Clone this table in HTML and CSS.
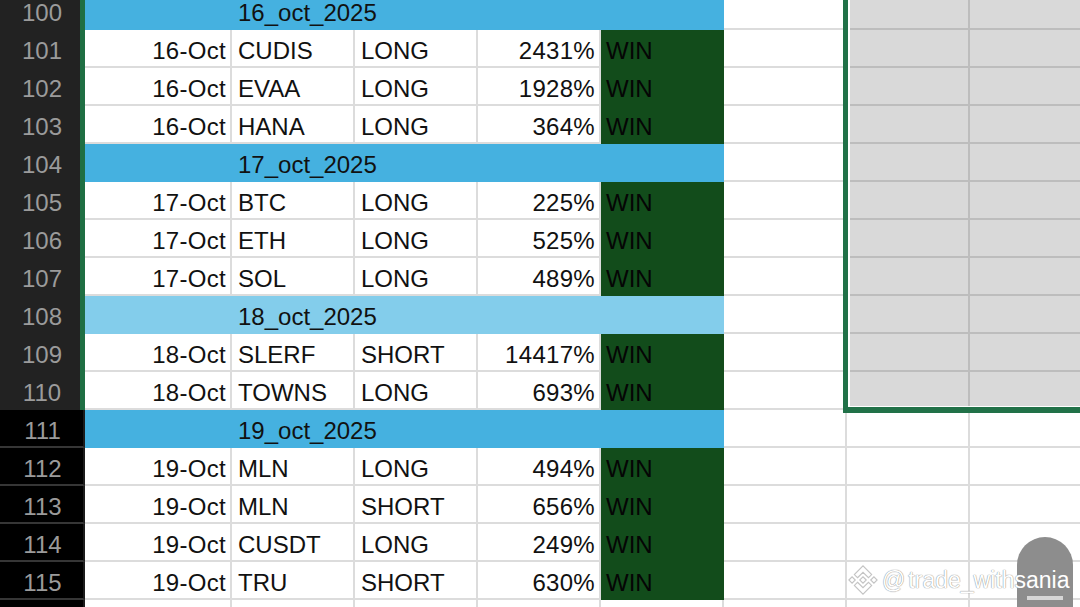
FILE: index.html
```html
<!DOCTYPE html>
<html>
<head>
<meta charset="utf-8">
<link rel="stylesheet" href="styles.css">
</head>
<body>
<div class="sheet">
  <div class="row sel"><div class="hdr">100</div><div class="band">16_oct_2025</div><div class="c"></div><div class="c g"></div><div class="c g"></div></div>
  <div class="row sel"><div class="hdr">101</div><div class="c r">16-Oct</div><div class="c">CUDIS</div><div class="c">LONG</div><div class="c r">2431%</div><div class="win">WIN</div><div class="c"></div><div class="c g"></div><div class="c g"></div></div>
  <div class="row sel"><div class="hdr">102</div><div class="c r">16-Oct</div><div class="c">EVAA</div><div class="c">LONG</div><div class="c r">1928%</div><div class="win">WIN</div><div class="c"></div><div class="c g"></div><div class="c g"></div></div>
  <div class="row sel"><div class="hdr">103</div><div class="c r">16-Oct</div><div class="c">HANA</div><div class="c">LONG</div><div class="c r">364%</div><div class="win">WIN</div><div class="c"></div><div class="c g"></div><div class="c g"></div></div>
  <div class="row sel"><div class="hdr">104</div><div class="band">17_oct_2025</div><div class="c"></div><div class="c g"></div><div class="c g"></div></div>
  <div class="row sel"><div class="hdr">105</div><div class="c r">17-Oct</div><div class="c">BTC</div><div class="c">LONG</div><div class="c r">225%</div><div class="win">WIN</div><div class="c"></div><div class="c g"></div><div class="c g"></div></div>
  <div class="row sel"><div class="hdr">106</div><div class="c r">17-Oct</div><div class="c">ETH</div><div class="c">LONG</div><div class="c r">525%</div><div class="win">WIN</div><div class="c"></div><div class="c g"></div><div class="c g"></div></div>
  <div class="row sel"><div class="hdr">107</div><div class="c r">17-Oct</div><div class="c">SOL</div><div class="c">LONG</div><div class="c r">489%</div><div class="win">WIN</div><div class="c"></div><div class="c g"></div><div class="c g"></div></div>
  <div class="row sel"><div class="hdr">108</div><div class="band light">18_oct_2025</div><div class="c"></div><div class="c g"></div><div class="c g"></div></div>
  <div class="row sel"><div class="hdr">109</div><div class="c r">18-Oct</div><div class="c">SLERF</div><div class="c">SHORT</div><div class="c r">14417%</div><div class="win">WIN</div><div class="c"></div><div class="c g"></div><div class="c g"></div></div>
  <div class="row sel"><div class="hdr">110</div><div class="c r">18-Oct</div><div class="c">TOWNS</div><div class="c">LONG</div><div class="c r">693%</div><div class="win">WIN</div><div class="c"></div><div class="c g"></div><div class="c g"></div></div>
  <div class="row"><div class="hdr">111</div><div class="band">19_oct_2025</div><div class="c"></div><div class="c"></div><div class="c"></div></div>
  <div class="row"><div class="hdr">112</div><div class="c r">19-Oct</div><div class="c">MLN</div><div class="c">LONG</div><div class="c r">494%</div><div class="win">WIN</div><div class="c"></div><div class="c"></div><div class="c"></div></div>
  <div class="row"><div class="hdr">113</div><div class="c r">19-Oct</div><div class="c">MLN</div><div class="c">SHORT</div><div class="c r">656%</div><div class="win">WIN</div><div class="c"></div><div class="c"></div><div class="c"></div></div>
  <div class="row"><div class="hdr">114</div><div class="c r">19-Oct</div><div class="c">CUSDT</div><div class="c">LONG</div><div class="c r">249%</div><div class="win">WIN</div><div class="c"></div><div class="c"></div><div class="c"></div></div>
  <div class="row"><div class="hdr">115</div><div class="c r">19-Oct</div><div class="c">TRU</div><div class="c">SHORT</div><div class="c r">630%</div><div class="win">WIN</div><div class="c"></div><div class="c"></div><div class="c"></div></div>
  <div class="row"><div class="hdr"></div><div class="c"></div><div class="c"></div><div class="c"></div><div class="c"></div><div class="c"></div><div class="c"></div><div class="c"></div><div class="c"></div></div>
  <div class="selection"></div>
</div>
<div class="watermark">
  <svg class="bnb" viewBox="-4 -4 134.61 134.61" width="30" height="30">
    <path d="M38.73 53.2l24.59-24.58 24.6 24.6 14.3-14.31L63.32 0 24.43 38.9z M0 63.31l14.3-14.31 14.31 14.31-14.31 14.3z M38.73 73.41l24.59 24.59 24.6-24.6 14.31 14.29-38.9 38.91-38.91-38.88z M98 63.31l14.3-14.31 14.31 14.3-14.31 14.32z M77.83 63.3L63.32 48.78 52.59 59.51l-1.24 1.23-2.54 2.54 14.51 14.5 14.51-14.47z" fill="#fff" stroke="#c4c4c4" stroke-width="5"/>
  </svg>
  <span class="wm-text"><span class="at">@</span>trade_withsania</span>
</div>
<div class="blob"><div class="blob-bar"></div></div>
</body>
</html>
```

FILE: styles.css
```css
html, body {
  margin: 0;
  padding: 0;
  width: 1080px;
  height: 607px;
  overflow: hidden;
  background: #fff;
  font-family: "Liberation Sans", Arial, sans-serif;
}

.sheet {
  position: relative;
  width: 1093px;
  margin-top: -8px;
}

.row {
  display: grid;
  grid-template-columns: 85px 147px repeat(7, 123px);
  height: 38px;
}

.hdr,
.c,
.band,
.win {
  box-sizing: border-box;
  height: 38px;
  font-size: 24px;
  line-height: 27px;
  padding-top: 7px;
  white-space: nowrap;
  overflow: hidden;
  color: #111;
}

.hdr {
  background: #000;
  color: #9b9b9b;
  text-align: center;
  padding-left: 2px;
  border-right: 2px solid #1b1b1b;
  border-bottom: 2px solid #363636;
}

.row.sel .hdr {
  background: #222222;
  border-right: 5px solid #1f6f43;
  border-bottom: none;
  padding-left: 4px;
}

.c {
  border-right: 2px solid #dcdcdc;
  border-bottom: 2px solid #dcdcdc;
  padding-left: 6px;
  padding-right: 4px;
  background: #fff;
}

.c.r {
  text-align: right;
  letter-spacing: 0.3px;
}

.c.g {
  background: #d9d9d9;
  border-right-color: #bdbdbd;
  border-bottom-color: #bdbdbd;
}

.band {
  grid-column: span 5;
  background: #45b1e0;
  padding-left: 153px;
}

.band.light {
  background: #83cdeb;
}

.win {
  background: #124c1b;
  padding-left: 5px;
  color: #050505;
}

.selection {
  position: absolute;
  left: 843px;
  top: 0;
  width: 260px;
  height: 421px;
  box-sizing: border-box;
  border-left: 5px solid #217148;
  border-bottom: 6px solid #217148;
  box-shadow: inset 2px -1px 0 #fff;
  pointer-events: none;
}

.watermark {
  position: absolute;
  left: 848px;
  top: 565px;
  display: flex;
  align-items: center;
  gap: 4px;
  white-space: nowrap;
  z-index: 2;
}

.bnb {
  display: block;
  flex-shrink: 0;
}

.wm-text {
  font-size: 23px;
  line-height: 30px;
  color: #fff;
  white-space: nowrap;
  text-shadow: 0 0 1px #8a8a8a, 0 0 1px #9a9a9a;
}

.at {
  margin-right: 3px;
}

.blob {
  position: absolute;
  left: 1017px;
  top: 537px;
  width: 56px;
  height: 70px;
  background: #8d8d8d;
  border-radius: 28px 28px 0 0;
  z-index: 1;
}

.blob-bar {
  position: absolute;
  left: 10px;
  top: 59px;
  width: 36px;
  height: 4px;
  background: #d6d6d6;
}
```
